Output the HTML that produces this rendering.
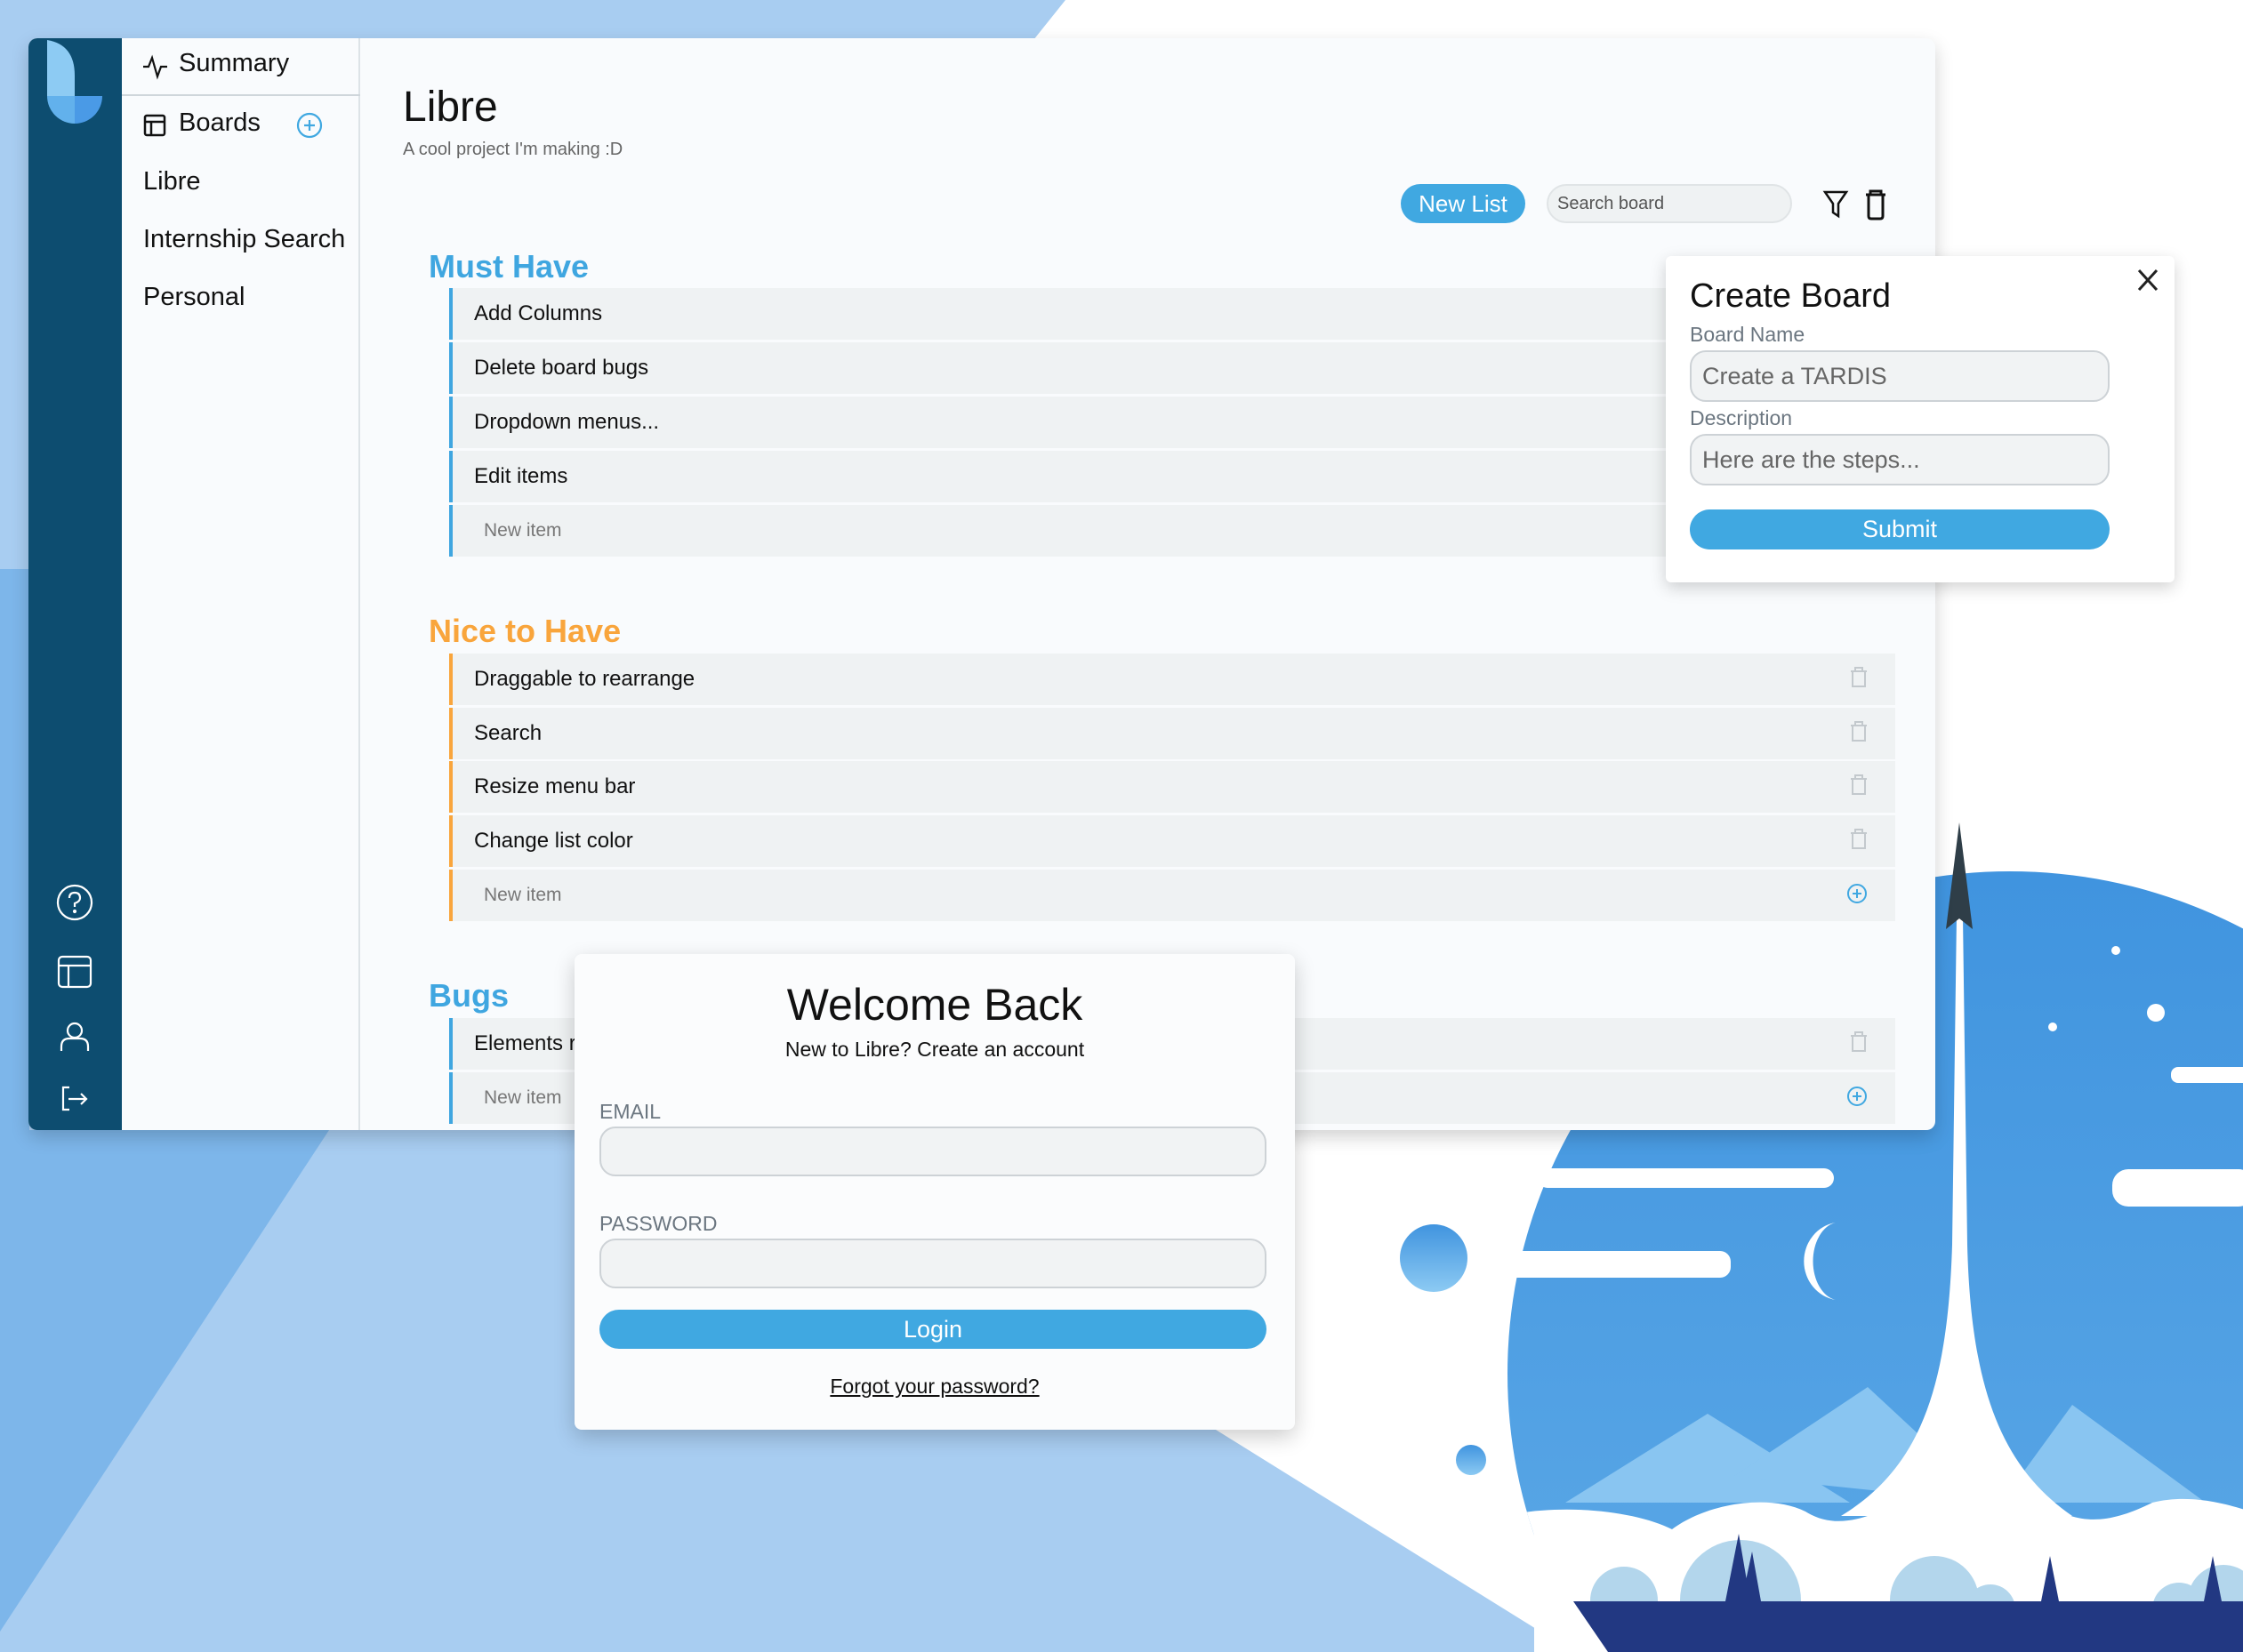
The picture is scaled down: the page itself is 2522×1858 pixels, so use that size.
<!DOCTYPE html>
<html><head><meta charset="utf-8"><style>
*{box-sizing:border-box;margin:0;padding:0}
html,body{width:2522px;height:1858px;overflow:hidden}
body{position:relative;background:#fff;font-family:"Liberation Sans",sans-serif}
.a{position:absolute}
.row{position:absolute;left:505px;width:1626px;height:58px;background:#eff2f3;border-left:4px solid #3fa6e0;font-size:24px;color:#111;line-height:58px;padding-left:24px}
.row.o{border-left-color:#f9a53c}
.row.n{color:#777;font-size:21px;padding-left:35px}
.ti{position:absolute;right:30px;top:14px}
.nav{position:absolute;left:129px;font-size:29px;color:#111}
.lab{position:absolute;font-size:22px;color:#6b7680}
.inp{position:absolute;background:#f1f3f4;border:2px solid #cdd2d6;border-radius:18px}
.btn{position:absolute;background:#40a8e1;color:#fff;text-align:center;border-radius:24px}
</style></head><body>
<svg class="a" style="left:0;top:0" width="2522" height="1858">
<polygon points="0,0 1198,0 1150,60 1000,1270 1367,1608 1769,1858 0,1858" fill="#a8cdf1"/>
<polygon points="0,640 33,640 33,1271 370,1271 0,1835" fill="#7db6ea"/>
<defs><linearGradient id="g" x1="0" y1="0" x2="0" y2="1"><stop offset="0" stop-color="#4094df"/><stop offset="1" stop-color="#62ade8"/></linearGradient>
<linearGradient id="g2" x1="0" y1="0" x2="0" y2="1"><stop offset="0" stop-color="#4094df"/><stop offset="1" stop-color="#8ccaf3"/></linearGradient>
<clipPath id="cc"><circle cx="2260" cy="1545" r="565"/><rect x="1725" y="1690" width="800" height="170"/></clipPath></defs>
<circle cx="2260" cy="1545" r="565" fill="url(#g)"/>
<g clip-path="url(#cc)">
<polygon points="1760,1690 1920,1590 2080,1690" fill="#89c5f1"/>
<polygon points="1950,1660 2100,1560 2240,1690" fill="#89c5f1"/>
<polygon points="2250,1690 2330,1580 2480,1690" fill="#89c5f1"/>
<path d="M2200,1030 L2207,1030 L2212,1400 C2216,1560 2250,1650 2330,1705 L2070,1705 C2160,1650 2190,1560 2195,1400Z" fill="#fff"/>
<path d="M1690,1705 C1760,1690 1840,1700 1880,1720 C1920,1690 1990,1680 2030,1700 C2070,1725 2110,1700 2140,1690 L2300,1690 C2340,1720 2380,1710 2420,1690 C2460,1680 2500,1690 2530,1700 L2530,1860 L1690,1860Z" fill="#fff"/>
</g>
<circle cx="1826" cy="1800" r="38" fill="#b3d6ec"/>
<circle cx="1957" cy="1800" r="68" fill="#b3d6ec"/>
<circle cx="2175" cy="1800" r="50" fill="#b3d6ec"/>
<circle cx="2238" cy="1810" r="28" fill="#b3d6ec"/>
<circle cx="2450" cy="1810" r="30" fill="#b3d6ec"/>
<circle cx="2500" cy="1800" r="40" fill="#b3d6ec"/>
<polygon points="1940,1801 1955,1725 1968,1801" fill="#223882"/>
<polygon points="1958,1801 1970,1745 1980,1801" fill="#223882"/>
<polygon points="2295,1801 2305,1750 2315,1801" fill="#223882"/>
<polygon points="2478,1801 2488,1750 2498,1801" fill="#223882"/>
<polygon points="1769,1801 2522,1801 2522,1858 1808,1858" fill="#223882"/>
<polygon points="2203,925 2188,1045 2203,1033 2218,1045" fill="#2f3e48"/>
<circle cx="1612" cy="1415" r="38" fill="url(#g2)"/>
<circle cx="1654" cy="1642" r="17" fill="url(#g2)"/>
<rect x="1729" y="1314" width="333" height="22" rx="11" fill="#fff"/>
<rect x="1681" y="1407" width="265" height="30" rx="12" fill="#fff"/>
<rect x="2375" y="1315" width="160" height="42" rx="18" fill="#fff"/>
<rect x="2441" y="1200" width="100" height="18" rx="8" fill="#fff"/>
<path d="M2064,1375 A42,44 0 0,0 2064,1462 A30,44 0 0,1 2064,1375Z" fill="#fff"/>
<circle cx="2379" cy="1069" r="5" fill="#fff"/>
<circle cx="2424" cy="1139" r="10" fill="#fff"/>
<circle cx="2308" cy="1155" r="5" fill="#fff"/>
</svg>

<div class="a" style="left:32px;top:43px;width:2144px;height:1228px;border-radius:10px;overflow:hidden;background:#f9fbfd;box-shadow:0 8px 20px rgba(0,0,0,0.18)">
  <div class="a" style="left:0;top:0;width:105px;height:1228px;background:#0d4d70"></div>
  <svg class="a" style="left:21px;top:2px" width="64" height="98"><path d="M0,0 L0,63 L31,63 L31,40 Q31,5 0,0Z" fill="#8dcbf3"/><path d="M0,63 A31,31 0 0,0 31,94 L31,63Z" fill="#62b1ec"/><path d="M31,63 L62,63 A31,31 0 0,1 31,94Z" fill="#4a9ae6"/></svg>
  <svg class="a" style="left:30px;top:950px" width="48" height="290" fill="none" stroke="#fff" stroke-width="2.2">
    <circle cx="22" cy="22" r="19"/><path d="M16,17 Q16,11 22,11 Q28,11 28,17 Q28,21 22,23 L22,27"/><circle cx="22" cy="32" r="1" fill="#fff"/>
    <rect x="4" y="83" width="36" height="34" rx="4"/><path d="M4,93 H40 M15,93 V117"/>
    <circle cx="22" cy="166" r="8"/><path d="M7,189 V184 Q7,175 16,175 H28 Q37,175 37,184 V189"/>
    <path d="M16,230 H9 V255 H16 M15,243 H35 M29,237 L35,243 L29,249"/>
  </svg>
  <div class="a" style="left:105px;top:0;width:268px;height:1228px;background:#f9fbfd;border-right:2px solid #dde3e7;overflow:hidden">
    <div class="nav" style="left:64px;top:12px">Summary</div>
    <div class="nav" style="left:64px;top:79px">Boards</div>
    <div class="nav" style="left:24px;top:145px">Libre</div>
    <div class="nav" style="left:24px;top:210px">Internship Search</div>
    <div class="nav" style="left:24px;top:275px">Personal</div>
  </div>
  <div class="a" style="left:105px;top:63px;width:268px;height:2px;background:#cfd6db"></div>
  <svg class="a" style="left:128px;top:17px" width="30" height="30" fill="none" stroke="#111" stroke-width="2.2"><path d="M1,15 H7 L11,5 L17,26 L21,15 H28"/></svg>
  <svg class="a" style="left:128px;top:83px" width="30" height="30" fill="none" stroke="#111" stroke-width="2.5"><rect x="3" y="4" width="22" height="22" rx="2"/><path d="M3,11 H25 M10,11 V26"/></svg>
  <svg class="a" style="left:300px;top:82px" width="32" height="32" fill="none" stroke="#40a8e1" stroke-width="2.2"><circle cx="16" cy="16" r="13"/><path d="M16,10 V22 M10,16 H22"/></svg>

  <div class="a" style="left:421px;top:50px;font-size:48px;color:#111">Libre</div>
  <div class="a" style="left:421px;top:114px;font-size:20px;color:#666">A cool project I'm making :D</div>
  <div class="btn" style="left:1543px;top:164px;width:140px;height:44px;line-height:44px;font-size:26px">New List</div>
  <div class="a" style="left:1707px;top:164px;width:276px;height:44px;background:#eff2f3;border:2px solid #e0e4e6;border-radius:22px;font-size:20px;color:#555;line-height:40px;padding-left:10px">Search board</div>
  <svg class="a" style="left:2016px;top:168px" width="34" height="36" fill="none" stroke="#111" stroke-width="2.5"><path d="M4,5 H28 L19,18 V32 L13,28 V18Z"/></svg>
  <svg class="a" style="left:2062px;top:166px" width="30" height="40" fill="none" stroke="#111" stroke-width="3"><path d="M4,10 H26 M9,10 V6 H21 V10 M7,10 V34 Q7,37 10,37 H20 Q23,37 23,34 V10"/></svg>
</div>

<div class="a" style="left:32px;top:43px;width:2144px;height:1228px;overflow:hidden;border-radius:10px">
  <div class="a" style="left:450px;top:236px;font-size:36px;color:#3fa6e0;font-weight:bold">Must Have</div>
  <div class="a" style="left:450px;top:646px;font-size:36px;color:#f9a53c;font-weight:bold">Nice to Have</div>
  <div class="a" style="left:450px;top:1056px;font-size:36px;color:#3fa6e0;font-weight:bold">Bugs</div>
</div>
<div class="a" style="left:0;top:0;width:2176px;height:1271px;overflow:hidden">
  <div class="row" style="top:324px">Add Columns</div>
  <div class="row" style="top:385px">Delete board bugs</div>
  <div class="row" style="top:446px">Dropdown menus...</div>
  <div class="row" style="top:507px">Edit items</div>
  <div class="row n" style="top:568px">New item</div>
  <div class="row o" style="top:735px">Draggable to rearrange<svg class="ti" width="22" height="26" fill="none" stroke="#c3c9cd" stroke-width="2"><path d="M2,6 H20 M7,6 V2 H15 V6 M4,6 V23 H18 V6"/></svg></div>
  <div class="row o" style="top:796px">Search<svg class="ti" width="22" height="26" fill="none" stroke="#c3c9cd" stroke-width="2"><path d="M2,6 H20 M7,6 V2 H15 V6 M4,6 V23 H18 V6"/></svg></div>
  <div class="row o" style="top:856px">Resize menu bar<svg class="ti" width="22" height="26" fill="none" stroke="#c3c9cd" stroke-width="2"><path d="M2,6 H20 M7,6 V2 H15 V6 M4,6 V23 H18 V6"/></svg></div>
  <div class="row o" style="top:917px">Change list color<svg class="ti" width="22" height="26" fill="none" stroke="#c3c9cd" stroke-width="2"><path d="M2,6 H20 M7,6 V2 H15 V6 M4,6 V23 H18 V6"/></svg></div>
  <div class="row o n" style="top:978px">New item<svg class="ti" width="26" height="26" fill="none" stroke="#40a8e1" stroke-width="2"><circle cx="13" cy="13" r="10"/><path d="M13,8 V18 M8,13 H18"/></svg></div>
  <div class="row" style="top:1145px">Elements r<svg class="ti" width="22" height="26" fill="none" stroke="#c3c9cd" stroke-width="2"><path d="M2,6 H20 M7,6 V2 H15 V6 M4,6 V23 H18 V6"/></svg></div>
  <div class="row n" style="top:1206px">New item<svg class="ti" width="26" height="26" fill="none" stroke="#40a8e1" stroke-width="2"><circle cx="13" cy="13" r="10"/><path d="M13,8 V18 M8,13 H18"/></svg></div>
</div>

<div class="a" style="left:1873px;top:288px;width:572px;height:367px;background:#fff;border-radius:6px;box-shadow:0 6px 18px rgba(0,0,0,0.18)">
  <div class="a" style="left:27px;top:24px;font-size:38px;color:#111">Create Board</div>
  <svg class="a" style="left:528px;top:12px" width="28" height="30" fill="none" stroke="#222" stroke-width="3"><path d="M4,4 L24,26 M24,4 L4,26"/></svg>
  <div class="lab" style="left:27px;top:75px;font-size:23px">Board Name</div>
  <div class="inp" style="left:27px;top:106px;width:472px;height:58px;font-size:27px;color:#666;line-height:54px;padding-left:12px">Create a TARDIS</div>
  <div class="lab" style="left:27px;top:169px;font-size:23px">Description</div>
  <div class="inp" style="left:27px;top:200px;width:472px;height:58px;font-size:27px;color:#666;line-height:54px;padding-left:12px">Here are the steps...</div>
  <div class="btn" style="left:27px;top:285px;width:472px;height:45px;line-height:45px;font-size:27px">Submit</div>
</div>

<div class="a" style="left:646px;top:1073px;width:810px;height:535px;background:#fbfcfd;border-radius:8px;box-shadow:0 8px 24px rgba(0,0,0,0.2)">
  <div class="a" style="left:0;width:810px;top:28px;text-align:center;font-size:50px;color:#111">Welcome Back</div>
  <div class="a" style="left:0;width:810px;top:94px;text-align:center;font-size:23px;color:#111">New to Libre? Create an account</div>
  <div class="lab" style="left:28px;top:164px;font-size:23px">EMAIL</div>
  <div class="inp" style="left:28px;top:194px;width:750px;height:56px"></div>
  <div class="lab" style="left:28px;top:290px;font-size:23px">PASSWORD</div>
  <div class="inp" style="left:28px;top:320px;width:750px;height:56px"></div>
  <div class="btn" style="left:28px;top:400px;width:750px;height:44px;line-height:44px;font-size:27px">Login</div>
  <div class="a" style="left:0;width:810px;top:473px;text-align:center;font-size:23px;color:#111;text-decoration:underline">Forgot your password?</div>
</div>
</body></html>
